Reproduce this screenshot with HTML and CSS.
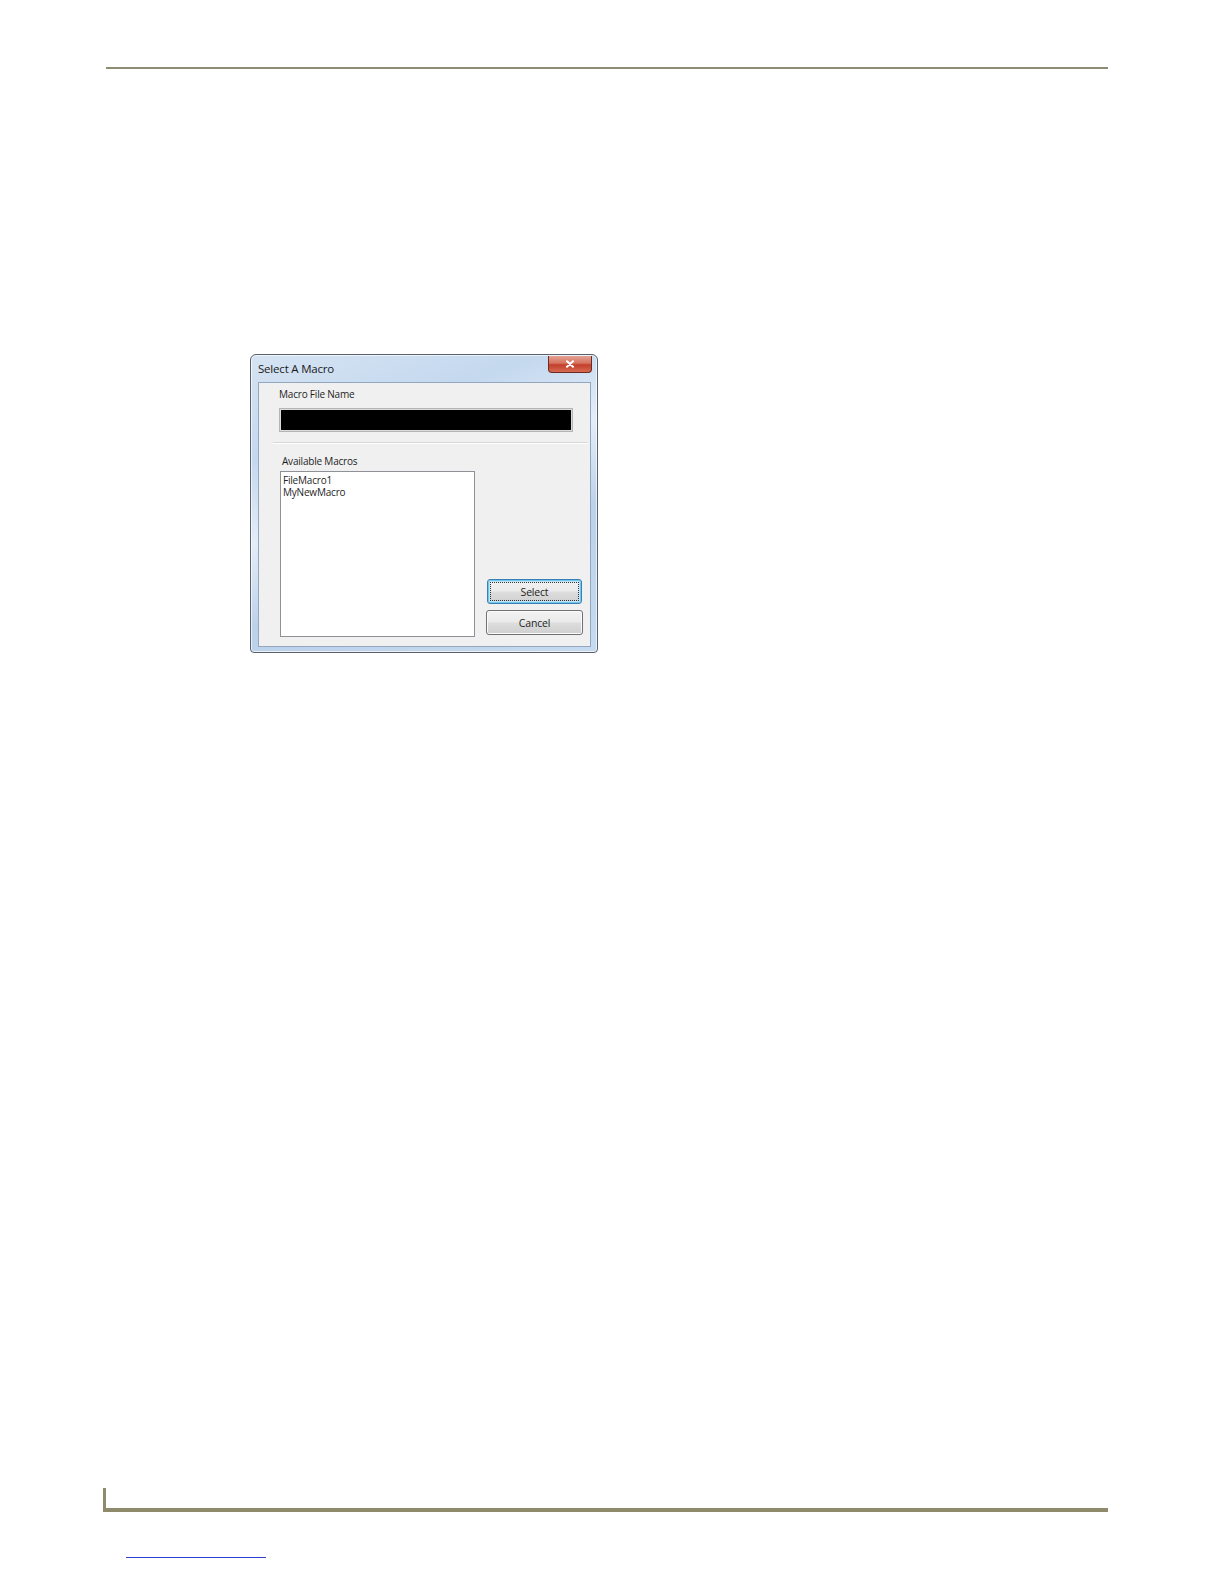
FILE: index.html
```html
<!DOCTYPE html>
<html>
<head>
<meta charset="utf-8">
<title>Select A Macro</title>
<link rel="stylesheet" href="styles.css">
</head>
<body>
<div class="page">
  <div class="header-rule"></div>

  <div class="figure">
    <div class="window">
      <div class="titlebar">
        <span class="title">Select A Macro</span>
        <span class="close-btn">
          <svg width="10" height="8" viewBox="0 0 10 8"><path d="M2 1.2 L8 6.8 M8 1.2 L2 6.8" stroke="#fff" stroke-width="2" stroke-linecap="round"/></svg>
        </span>
      </div>
      <div class="client">
        <div class="name-section">
          <div class="label">Macro File Name</div>
          <div class="textbox"></div>
        </div>
        <div class="separator"></div>
        <div class="lower">
          <div class="list-col">
            <div class="label label-list">Available Macros</div>
            <div class="listbox">
              <div class="item">FileMacro1</div>
              <div class="item">MyNewMacro</div>
            </div>
          </div>
          <div class="btn-col">
            <div class="btn btn-default"><span class="focus">Select</span></div>
            <div class="btn btn-cancel">Cancel</div>
          </div>
        </div>
      </div>
    </div>
  </div>

  <div class="footer-rule"></div>
  <div class="footer-link"></div>
</div>
</body>
</html>
```

FILE: styles.css
```css
html, body {
  margin: 0;
  padding: 0;
  background: #ffffff;
}

.page {
  width: 1224px;
  height: 1584px;
  overflow: hidden;
  font-family: "Open Sans", "Noto Sans", "DejaVu Sans", sans-serif;
}

.header-rule {
  margin-top: 67px;
  margin-left: 106px;
  width: 1002px;
  height: 2px;
  background: #8f8c74;
}

.figure {
  margin-top: 285px;
  margin-left: 250px;
  width: 348px;
  height: 299px;
}

.window {
  box-sizing: border-box;
  width: 348px;
  height: 299px;
  border: 1px solid #5a616b;
  border-radius: 6px 6px 4px 4px;
  background: linear-gradient(160deg, #d6e4f3 0%, #c4d8ee 25%, #e3edf8 45%, #bcd1ea 65%, #c6daf0 100%);
  padding: 0 6px 5px 7px;
  display: flex;
  flex-direction: column;
  box-shadow: inset 0 0 0 1px rgba(255,255,255,0.65);
}

.titlebar {
  height: 27px;
  display: flex;
  align-items: flex-start;
  justify-content: space-between;
  flex: none;
}

.title {
  margin-top: 6px;
  font-size: 11.5px;
  line-height: 15px;
  color: #1a1a1a;
  letter-spacing: -0.2px;
}

.close-btn {
  width: 44px;
  height: 17px;
  margin-top: 1px;
  margin-right: -1px;
  box-sizing: border-box;
  border: 1px solid #6e2a22;
  border-top: none;
  border-radius: 0 0 4px 4px;
  background: linear-gradient(to bottom, #e3a193 0%, #d6735f 45%, #c33f2a 55%, #d66a52 100%);
  display: flex;
  align-items: center;
  justify-content: center;
}

.client {
  flex: 1;
  box-sizing: border-box;
  border: 1px solid #93a7bf;
  background: #f0f0f0;
  display: flex;
  flex-direction: column;
  padding: 0 2px 0 14px;
}

.label {
  font-size: 10px;
  line-height: 12px;
  color: #1e1e1e;
  letter-spacing: -0.2px;
}

.name-section {
  padding-left: 6px;
  padding-top: 5px;
}

.textbox {
  margin-top: 8px;
  width: 294px;
  height: 24px;
  box-sizing: border-box;
  border: 1px solid #b5b5b5;
  background: #000000;
  box-shadow: inset 0 0 0 1px #dcdcdc;
}

.separator {
  margin-top: 10px;
  width: 315px;
  height: 0;
  border-top: 1px solid #d8d8d8;
  border-bottom: 1px solid #ffffff;
}

.lower {
  display: flex;
  padding-left: 7px;
  margin-top: 11px;
}

.list-col {
  display: flex;
  flex-direction: column;
}

.label-list {
  padding-left: 2px;
}

.listbox {
  margin-top: 4px;
  width: 195px;
  height: 166px;
  box-sizing: border-box;
  border: 1px solid #8e9297;
  background: #ffffff;
  padding: 2px 2px;
}

.item {
  font-size: 10px;
  line-height: 12px;
  color: #1e1e1e;
  letter-spacing: -0.2px;
}

.btn-col {
  display: flex;
  flex-direction: column;
  justify-content: flex-end;
  margin-left: 11px;
  padding-bottom: 2px;
  gap: 6px;
}

.btn {
  box-sizing: border-box;
  height: 25px;
  border-radius: 3px;
  font-size: 10.5px;
  color: #1e1e1e;
  letter-spacing: -0.2px;
  display: flex;
  align-items: center;
  justify-content: center;
}

.btn-default {
  width: 95px;
  margin-left: 1px;
  border: 1px solid #3c7fb1;
  background: linear-gradient(to bottom, #f2f2f2 0%, #ebebeb 48%, #dddddd 52%, #cfcfcf 100%);
  box-shadow: inset 0 0 0 1px #6fc6ee, inset 0 0 0 2px #bfe6f8;
  padding: 2px;
}

.focus {
  flex: 1;
  align-self: stretch;
  display: flex;
  align-items: center;
  justify-content: center;
  border: 1px dotted #333;
}

.btn-cancel {
  width: 97px;
  border: 1px solid #707070;
  background: linear-gradient(to bottom, #f2f2f2 0%, #ebebeb 48%, #dddddd 52%, #cfcfcf 100%);
  box-shadow: inset 0 0 0 1px #fbfbfb;
}

.footer-rule {
  margin-top: 835px;
  margin-left: 103px;
  width: 1002px;
  height: 20px;
  border-left: 3px solid #8f8a6c;
  border-bottom: 4px solid #8f8a6c;
}

.footer-link {
  margin-top: 45px;
  margin-left: 126px;
  width: 140px;
  height: 1px;
  background: #2f3fd0;
}
```
